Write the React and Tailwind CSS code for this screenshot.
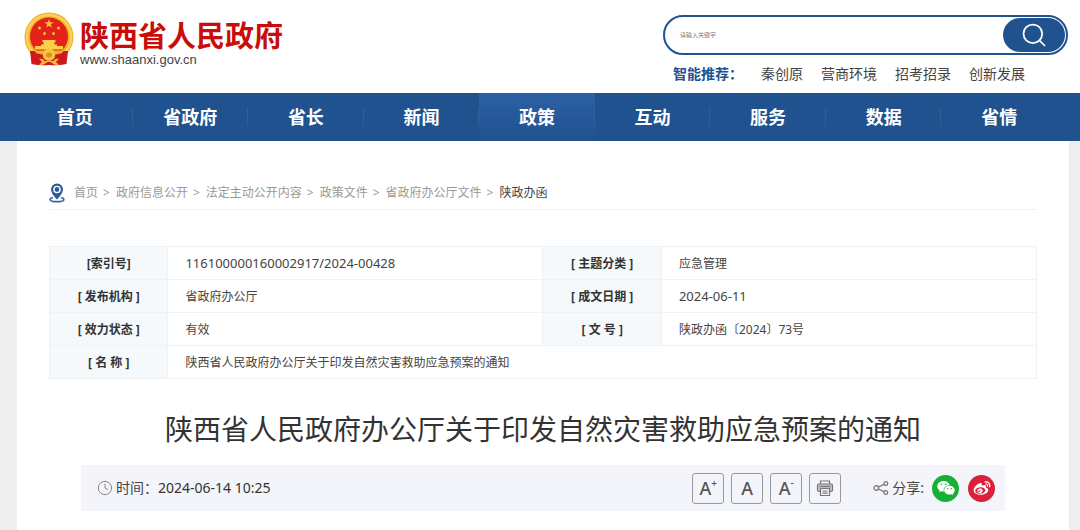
import { Clock4, Search } from 'lucide-react'
import { AiFillWechat, AiOutlineWeibo } from 'react-icons/ai'

const NAV_ITEMS = ['首页', '省政府', '省长', '新闻', '政策', '互动', '服务', '数据', '省情']
const ACTIVE_NAV = '政策'

const HOT_LINKS = ['秦创原', '营商环境', '招考招录', '创新发展']

const CRUMBS = ['首页', '政府信息公开', '法定主动公开内容', '政策文件', '省政府办公厅文件']

const INFO_ROWS = [
  [
    { label: '[索引号]', value: '116100000160002917/2024-00428', numeric: true },
    { label: '[ 主题分类 ]', value: '应急管理' },
  ],
  [
    { label: '[ 发布机构 ]', value: '省政府办公厅' },
    { label: '[ 成文日期 ]', value: '2024-06-11', numeric: true },
  ],
  [
    { label: '[ 效力状态 ]', value: '有效' },
    { label: '[ 文 号 ]', value: '陕政办函〔2024〕73号' },
  ],
  [{ label: '[ 名 称 ]', value: '陕西省人民政府办公厅关于印发自然灾害救助应急预案的通知' }],
]

function Emblem() {
  return (
    <svg viewBox="0 0 50 54" className="h-[54px] w-[50px] shrink-0" aria-hidden="true">
      <circle cx="25" cy="25" r="24.5" fill="#f0b32e" />
      <circle cx="25" cy="25" r="22" fill="none" stroke="#fbd255" strokeWidth="2.5" />
      <circle cx="25" cy="24.5" r="19" fill="#e3231b" />
      <path d="M25 7l1.100 3.300h3.500l-2.800 2.100 1 3.400-2.800-2-2.800 2 1-3.400-2.800-2.100h3.500z" fill="#f7bd35" />
      <g fill="#f7bd35">
        <circle cx="15.500" cy="16" r="1.500" />
        <circle cx="34.500" cy="16" r="1.500" />
        <circle cx="20.500" cy="21.500" r="1.500" />
        <circle cx="29.500" cy="21.500" r="1.500" />
      </g>
      <path d="M19 28h12l1 2h-1.500v2.500h2.500V34h6v3.500H11V34h6v-1.500h2.500V30H18z" fill="#fad04b" />
      <path d="M6 39h38l-1 3H7z" fill="#c9181b" />
      <path d="M10 38.500h30l-3 3.500H13z" fill="#f0b32e" />
      <path d="M6 39q5 3 12 3.500l7 3.500 7-3.500q7-.5 12-3.500l-1.500 13q-9 2-17.500 1-8.500 1-17.500-1z" fill="#cf1a1c" />
      <path d="M15 46.500q4.500 0 6 3 4-3 8 0 1.500-3 6-3l-3 3.500 3 3q-5 .5-7-2-3-2.500-6 0-2 2.500-7 2l3-3z" fill="#f5be3a" />
      <path d="M19 42a6 5.500 0 0 1 12 0v2a6 4.500 0 0 1-12 0z" fill="#f7c640" />
      <ellipse cx="25" cy="43" rx="3" ry="2.500" fill="#df8f20" />
    </svg>
  )
}

function PinIcon() {
  return (
    <svg viewBox="0 0 16 20" className="h-5 w-4 shrink-0" aria-hidden="true">
      <path
        d="M4 14.500C2 15 1.200 15.700 1.200 16.400c0 1.400 3 2.300 6.800 2.300s6.800-.9 6.800-2.300c0-.7-.8-1.400-2.800-1.900"
        fill="none"
        stroke="#386aa5"
        strokeWidth="1.700"
      />
      <path d="M8 .5a6 6 0 0 0-6 6C2 10.500 8 16.500 8 16.500s6-6 6-10a6 6 0 0 0-6-6z" fill="#2a5c9b" />
      <circle cx="8" cy="6.500" r="3.100" fill="none" stroke="#fff" strokeWidth="1.400" />
    </svg>
  )
}

function PrinterIcon() {
  return (
    <svg viewBox="0 0 18 18" className="size-[18px]" fill="none" stroke="#777" strokeWidth="1.200" aria-hidden="true">
      <path d="M4.500 5V2h9v3" />
      <rect x="1.500" y="5" width="15" height="7.500" rx="1.500" fill="#c4c5ca" />
      <path d="M3.500 7.500h11" />
      <path d="M4.500 9.500h9v7h-9z" fill="#f4f5fb" />
      <path d="M6.500 12h5M6.500 14.200h5" />
    </svg>
  )
}

function ShareIcon() {
  return (
    <svg viewBox="0 0 16 16" className="size-4" fill="none" stroke="#777" strokeWidth="1.200" aria-hidden="true">
      <circle cx="3.300" cy="8" r="2.300" />
      <circle cx="12.800" cy="3.500" r="1.900" />
      <circle cx="12.800" cy="12.500" r="1.900" />
      <path d="M5.500 7l5.400-2.600M5.500 9l5.400 2.600" />
    </svg>
  )
}

function ToolButton({ label, children }) {
  return (
    <button
      type="button"
      aria-label={label}
      className="flex h-[31px] w-8 items-center justify-center rounded-[3px] border border-[#999] text-lg leading-none font-medium text-[#555]"
    >
      {children}
    </button>
  )
}

export default function App() {
  return (
    <div className="bg-[#eee] font-['Noto_Sans','Noto_Sans_CJK_SC',sans-serif] text-[#444]">
      <header className="flex justify-between bg-white pr-3 pl-6">
        <a href="#home" className="flex items-start gap-1.5 pt-3">
          <Emblem />
          <span className="flex flex-col pt-2">
            <span className="text-[29px] leading-8 font-bold text-[#c90d0a]">陕西省人民政府</span>
            <span className="font-['Liberation_Sans',sans-serif] text-[13px] leading-4 text-[#444]">www.shaanxi.gov.cn</span>
          </span>
        </a>

        <div className="w-[405px] pt-[15px] pb-[9px]">
          <form className="flex h-10 rounded-full border-2 border-[#20528f] p-px" onSubmit={(e) => e.preventDefault()}>
            <input
              type="text"
              aria-label="搜索"
              placeholder="请输入关键字"
              className="min-w-0 flex-1 rounded-full px-3.5 text-[6px] outline-none placeholder:text-[#777]"
            />
            <button type="submit" aria-label="搜索" className="flex w-[62px] items-center justify-center rounded-full bg-[#20528f] text-white">
              <Search size={28} strokeWidth={1.5} />
            </button>
          </form>
          <div className="mt-[9px] flex gap-[18px] pl-2.5 text-sm leading-5">
            <span className="w-[70px] font-bold text-[#20528f]">智能推荐：</span>
            {HOT_LINKS.map((item) => (
              <a key={item} href="#hot">{item}</a>
            ))}
          </div>
        </div>
      </header>

      <nav className="grid h-12 grid-cols-9 bg-[#20528f] pr-[23px] pl-[17px] text-lg font-bold text-white">
        {NAV_ITEMS.map((item) => (
          <a
            key={item}
            href="#nav"
            className={`relative flex items-center justify-center ${
              item === ACTIVE_NAV ? 'bg-linear-to-b from-[#2c60a5] to-[#20528f]' : ''
            }`}
          >
            {item}
            {item !== '省情' && <span className="absolute right-0 h-[18px] w-px bg-[#2f5f99]" />}
          </a>
        ))}
      </nav>

      <main className="mr-[11px] ml-[17px] bg-white px-8 pb-8">
        <div className="flex items-center border-b border-[#f2f2f2] pt-[41px] pb-[5px] text-xs leading-[22px] text-[#999]">
          <PinIcon />
          <ol className="ml-[9px] flex gap-1.5">
            {CRUMBS.map((crumb) => (
              <li key={crumb} className="flex gap-[5px]">
                <a href="#crumb">{crumb}</a>
                <span>&gt;</span>
              </li>
            ))}
            <li className="text-[#444]">陕政办函</li>
          </ol>
        </div>

        <table className="mt-9 w-full table-fixed border-collapse text-xs">
          <colgroup>
            <col className="w-[12%]" />
            <col className="w-[38%]" />
            <col className="w-[12%]" />
            <col className="w-[38%]" />
          </colgroup>
          <tbody>
            {INFO_ROWS.map((row) => (
              <tr key={row[0].label} className="h-[33px]">
                {row.map((cell) => [
                  <th key={cell.label} scope="row" className="border border-[#f0f1f3] bg-[#f5f9fc] pt-0.5 font-bold text-[#333]">
                    {cell.label}
                  </th>,
                  <td
                    key={cell.value}
                    colSpan={row.length === 1 ? 3 : 1}
                    className={`border border-[#f0f1f3] px-[17px] pt-0.5 ${cell.numeric ? 'text-[13px]' : ''}`}
                  >
                    {cell.value}
                  </td>,
                ])}
              </tr>
            ))}
          </tbody>
        </table>

        <h1 className="mt-[30px] text-center text-[28px] leading-10 text-[#333]">
          陕西省人民政府办公厅关于印发自然灾害救助应急预案的通知
        </h1>

        <div className="mx-8 mt-4 flex h-[46px] items-center justify-between bg-[#f4f5fb] pr-2.5 pl-4 text-sm">
          <div className="flex items-center">
            <Clock4 size={16} strokeWidth={1.5} className="mr-[3px] text-[#888]" />
            <span>时间：</span>
            <time className="text-[#333]">2024-06-14 10:25</time>
          </div>
          <div className="flex items-center">
            <div className="flex gap-[7px]">
              <ToolButton label="放大字号">A<sup className="text-[10px]">+</sup></ToolButton>
              <ToolButton label="默认字号">A</ToolButton>
              <ToolButton label="缩小字号">A<sup className="text-[10px]">-</sup></ToolButton>
              <ToolButton label="打印"><PrinterIcon /></ToolButton>
            </div>
            <div className="ml-8 flex items-center">
              <ShareIcon />
              <span className="ml-[3px]">分享:</span>
              <a href="#wechat" aria-label="微信" className="ml-2 flex size-[27px] items-center justify-center rounded-full bg-[#17b035] text-white">
                <AiFillWechat size={20} />
              </a>
              <a href="#weibo" aria-label="微博" className="ml-[9px] flex size-[27px] items-center justify-center rounded-full bg-[#dc1f3a] text-white">
                <AiOutlineWeibo size={20} />
              </a>
            </div>
          </div>
        </div>
      </main>
    </div>
  )
}
